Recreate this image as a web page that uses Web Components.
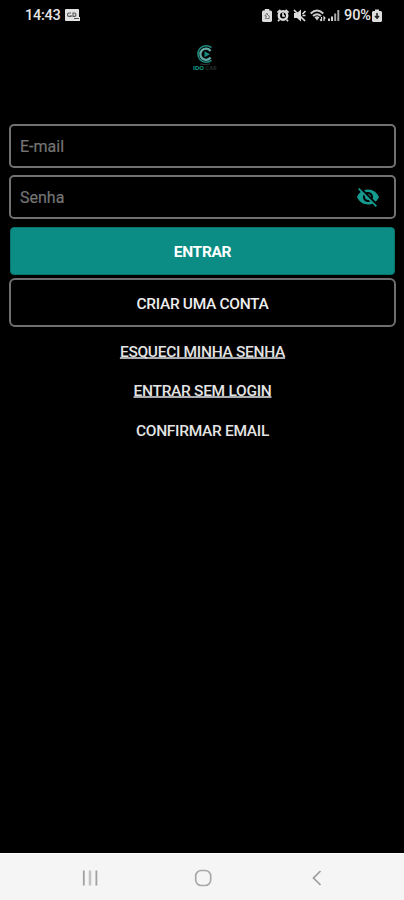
<!DOCTYPE html>
<html lang="pt-BR">
<head>
<meta charset="utf-8">
<title>Login</title>
<style>
html,body{margin:0;background:#000}
body{width:404px;height:900px;overflow:hidden;font-family:Roboto,"Liberation Sans",sans-serif}
</style>
</head>
<body>
<login-screen></login-screen>
<script>
const define=(name,html)=>customElements.define(name,class extends HTMLElement{
  constructor(){super();this.attachShadow({mode:'open'}).innerHTML=html;}
});

define('status-bar',`<style>
:host{display:flex;height:31px;box-sizing:border-box;padding:0 22px 0 25px;align-items:center;color:#e4e4e4;font-size:14.5px;font-weight:500;line-height:31px}
.time{width:36px;letter-spacing:-.25px;white-space:nowrap}
.note{margin-left:4px}
svg{display:block;flex:none}
.icons{display:flex;margin-left:auto;align-items:center}
.pct{width:28px;letter-spacing:-.1px;white-space:nowrap}
</style>
<span class="time">14:43</span>
<svg class="note" width="16" height="13" viewBox="0 0 16 13"><path d="M1 0h12q1 0 1 1v7h1v4H1q-1 0-1-1V1q0-1 1-1z" fill="#e2e2e2"/><path d="M6 4H4q-1.500 0-1.500 1.700T4 7.400h2V6M8 7.400V4h1.500q1.500 0 1.500 1.700T9.500 7.400zM9 9.500h5" fill="none" stroke="#555" stroke-width="1.100"/></svg>
<span class="icons">
<svg width="10" height="13" viewBox="0 0 9 13" preserveAspectRatio="none"><path d="M2.500 0h4v1.500H8l1 1V12l-1 1H1l-1-1V2.500l1-1h1.500z" fill="#ddd"/><path d="M4.500 4 2.500 7h1.500L3 9.500h3.500V7L5 6z" fill="none" stroke="#777" stroke-width=".9"/></svg>
<svg style="margin-left:5px" width="12" height="13" viewBox="0 0 12 13"><circle cx="6" cy="6.500" r="4.200" fill="none" stroke="#ddd" stroke-width="2.500"/><path d="M.5 3.500 3.500.8M11.500 3.500 8.500.8M2.500 10.500 1 12.300M9.500 10.500l1.500 1.800M6 4v3h2" fill="none" stroke="#ddd" stroke-width="1.700"/></svg>
<svg style="margin-left:4.500px" width="13" height="13" viewBox="0 0 13 13"><path d="M1 4h3l4-3.500v12L4 9H1z" fill="#ddd"/><path d="M1 1l11 11M9.500 5l3-3M9.500 6.500h3" stroke="#ddd" stroke-width="1.700"/></svg>
<svg style="margin-left:4px" width="16" height="13" viewBox="0 0 16 13"><path d="M.7 4.500Q7 -1.500 13.300 4.500M3 7Q7 3.300 11 7" fill="none" stroke="#ccc" stroke-width="1.900"/><path d="M4.500 8.300Q7 6 9.500 8.300L7 11.500z" fill="#ccc"/><path d="M11.500 8v4M10 10.500l1.500 1.500M14 12V8l1.300 1.500" fill="none" stroke="#ddd" stroke-width="1.200"/></svg>
<svg style="margin-left:2px" width="12" height="13" viewBox="0 0 12 13"><path d="M1 9.500V12M4 7.500V12" stroke="#ddd" stroke-width="1.900"/><path d="M7.200 4.500V12M10.300 1V12" stroke="#aaa" stroke-width="1.900"/></svg>
<span class="pct" style="margin-left:4px">90%</span>
<svg width="10" height="13" viewBox="0 0 10 13"><path d="M3 .5h4V2h2l1 1v9l-1 1H1l-1-1V3l1-1h2z" fill="#ddd"/><path d="M5 4v5M3 7l2 2 2-2" fill="none" stroke="#222" stroke-width="1.600"/></svg>
</span>`);

define('brand-logo',`<style>:host{display:flex;justify-content:center}svg{display:block}text{font:bold 5.500px Roboto,sans-serif}</style>
<svg width="30" height="32" viewBox="0 0 30 32">
<path d="M21.500 4.600A8.300 8.300 0 1 0 21.500 17.400" fill="none" stroke="#1b8b81" stroke-width="1.500"/>
<path d="M20.500 8A5.600 5.600 0 1 0 20.500 14.500" fill="none" stroke="#62aaa4" stroke-width="2.300"/>
<path d="M14.500 8.300l5.500 3-5.500 3z" fill="#168b80"/>
<path d="M10 21q5 1 10 0" stroke="#303a39" fill="none"/>
<text x="3" y="26.800" fill="#0c9685" textLength="11" lengthAdjust="spacingAndGlyphs">IDO</text><text x="15.500" y="26.800" fill="#252c2c" textLength="11" lengthAdjust="spacingAndGlyphs">CAR</text>
</svg>`);

define('text-field',`<style>
:host{display:flex;box-sizing:border-box;height:43.500px;border:2px solid #717171;border-radius:5px;align-items:center;justify-content:space-between;padding:1px 14px 0 9px;color:#747474;font-size:16px;-webkit-text-stroke:.2px #747474}
</style><slot></slot><slot name="action"></slot>`);

define('eye-off-icon',`<style>:host{display:block;height:24px}svg{display:block}</style>
<svg width="24" height="24" viewBox="0 0 24 24"><path fill="#159a90" d="M12 7c2.760 0 5 2.240 5 5 0 .65-.13 1.260-.36 1.830l2.920 2.920c1.510-1.260 2.700-2.890 3.430-4.750-1.730-4.390-6-7.500-11-7.500-1.400 0-2.740.25-3.980.7l2.160 2.160C10.740 7.130 11.350 7 12 7zM2 4.270l2.280 2.280.46.46C3.080 8.300 1.780 10.020 1 12c1.730 4.390 6 7.500 11 7.500 1.550 0 3.030-.3 4.380-.84l.42.42L19.730 22 21 20.730 3.270 3 2 4.270zM7.530 9.800l1.550 1.550c-.05.21-.08.43-.08.650 0 1.660 1.340 3 3 3 .22 0 .44-.03.65-.08l1.550 1.550c-.67.33-1.410.53-2.200.53-2.760 0-5-2.240-5-5 0-.79.2-1.530.53-2.200zm4.310-.78 3.150 3.150.02-.16c0-1.660-1.340-3-3-3l-.17.010z"/></svg>`);

define('action-button',`<style>
:host{display:flex;box-sizing:border-box;height:49px;border:2px solid #6f6f6f;border-radius:6px;align-items:center;justify-content:center;padding-top:3px;color:#ededed;font-size:15.500px;font-weight:500;letter-spacing:-.33px;white-space:nowrap}
:host([primary]){height:48px;padding-top:2px;background:#0b8c84;border:1px solid #08766f;color:#fff;font-weight:700;border-radius:4px}
</style><slot></slot>`);

define('text-link',`<style>
:host{display:flex;height:39.500px;align-items:center;justify-content:center;color:#e4e4e4;font-size:15.500px;font-weight:500;letter-spacing:-.3px;white-space:nowrap}
:host([underlined]) span{text-decoration:underline;text-decoration-color:#a9adaf;text-decoration-thickness:2px;text-underline-offset:0px;text-decoration-skip-ink:none}
</style><span><slot></slot></span>`);

define('nav-bar',`<style>
:host{display:flex;box-sizing:border-box;height:47px;background:#f5f5f5;border-top:1px solid #fff;align-items:center;justify-content:space-between;padding:1px 80px 0 80px}
svg{display:block}</style>
<svg width="20" height="20" viewBox="0 0 20 20"><path d="M3.800 2.500v15M16.400 2.500v15" stroke="#a0a0a0" stroke-width="1.800"/><path d="M10 2.500v15" stroke="#c2c2c2" stroke-width="2.500"/></svg>
<svg width="20" height="20" viewBox="0 0 20 20"><rect x="3.700" y="2.500" width="15" height="15" rx="5.500" fill="none" stroke="#a8a8a8" stroke-width="1.700"/></svg>
<svg width="20" height="20" viewBox="0 0 20 20"><path d="M16.500 3 9.500 10l7 7" fill="none" stroke="#9c9c9c" stroke-width="1.700"/></svg>`);

define('login-screen',`<style>
:host{display:flex;flex-direction:column;width:404px;height:900px;background:#000}
brand-logo{margin-top:12px;padding-left:5px}
main{display:flex;flex-direction:column;padding:0 8px 0 9px;margin-top:49px;flex:1}
#pw{margin-top:7.500px}
#enter{margin:8px 1px 0}
#create{margin-top:3px}
nav{margin-top:5.400px;display:flex;flex-direction:column}
</style>
<status-bar></status-bar>
<brand-logo></brand-logo>
<main>
<text-field><span>E-mail</span></text-field>
<text-field id="pw"><span>Senha</span><eye-off-icon slot="action"></eye-off-icon></text-field>
<action-button id="enter" primary>ENTRAR</action-button>
<action-button id="create">CRIAR UMA CONTA</action-button>
<nav><text-link underlined>ESQUECI MINHA SENHA</text-link><text-link underlined>ENTRAR SEM LOGIN</text-link><text-link>CONFIRMAR EMAIL</text-link></nav>
</main>
<nav-bar></nav-bar>`);
</script>
</body>
</html>
